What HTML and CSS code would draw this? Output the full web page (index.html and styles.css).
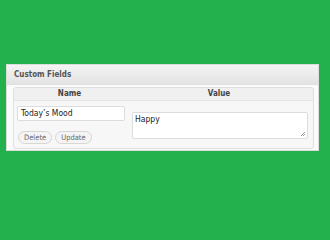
FILE: index.html
```html
<!DOCTYPE html>
<html>
<head>
<meta charset="utf-8">
<link rel="stylesheet" href="styles.css">
</head>
<body>
<div class="postbox">
  <div class="hndle">Custom Fields</div>
  <div class="inside">
    <div class="list">
      <div class="head">
        <div class="th name">Name</div>
        <div class="th value">Value</div>
      </div>
      <div class="row">
        <div class="left">
          <div class="input">Today’s Mood</div>
          <div class="buttons">
            <span class="btn">Delete</span>
            <span class="btn">Update</span>
          </div>
        </div>
        <div class="textarea">Happy
          <svg class="grip" width="6" height="6" viewBox="0 0 6 6"><path d="M5 1L1 5M5 3L3 5" stroke="#888" stroke-width="0.8"/></svg>
        </div>
      </div>
    </div>
  </div>
</div>
</body>
</html>
```
FILE: styles.css
```css
html, body { margin: 0; padding: 0; }
body {
  background: #22b14c;
  width: 330px;
  height: 220px;
  overflow: hidden;
  font-family: "DejaVu Sans Condensed", "DejaVu Sans", Verdana, sans-serif;
}
.postbox {
  margin: 64px 0 0 6px;
  width: 311px;
  height: 85px;
  border: 1px solid #dcdcdc;
  background: #fbfbfb;
  display: flex;
  flex-direction: column;
}
.hndle {
  height: 19px;
  line-height: 20px;
  padding-left: 7px;
  font-size: 8px;
  font-weight: bold;
  color: #555;
  background: linear-gradient(#f4f4f4, #e3e3e3);
  border-bottom: 1px solid #e0e0e0;
}
.inside {
  padding: 2px 4px 2px 6px;
}
.list {
  border: 1px solid #dfdfdf;
  border-radius: 3px;
  background: #f7f7f7;
  height: 60px;
}
.head {
  display: grid;
  grid-template-columns: 111px 1fr;
  height: 12px;
  background: #f0f0f0;
  border-bottom: 1px solid #e6e6e6;
  border-radius: 3px 3px 0 0;
}
.th {
  font-size: 8px;
  font-weight: bold;
  color: #444;
  text-align: center;
  line-height: 12px;
}
.row {
  display: grid;
  grid-template-columns: 108px 176px;
  column-gap: 7px;
  padding: 5px 0 0 3px;
}
.input {
  height: 13px;
  border: 1px solid #dcdcdc;
  border-radius: 2px;
  background: #fff;
  font-size: 8.5px;
  line-height: 13px;
  padding-left: 3px;
  color: #222;
}
.buttons {
  display: flex;
  gap: 3px;
  margin-top: 10px;
  padding-left: 1px;
}
.btn {
  height: 11px;
  line-height: 11px;
  padding: 0 5px;
  border: 1px solid #d6d6d6;
  border-radius: 7px;
  background: #f4f4f4;
  font-size: 7.5px;
  color: #666;
}
.textarea {
  position: relative;
  margin-top: 6px;
  height: 25px;
  border: 1px solid #dcdcdc;
  border-radius: 2px;
  background: #fff;
  font-size: 8.5px;
  line-height: 13px;
  padding-left: 2px;
  color: #222;
}
.grip {
  position: absolute;
  right: 1px;
  bottom: 1px;
}
```
